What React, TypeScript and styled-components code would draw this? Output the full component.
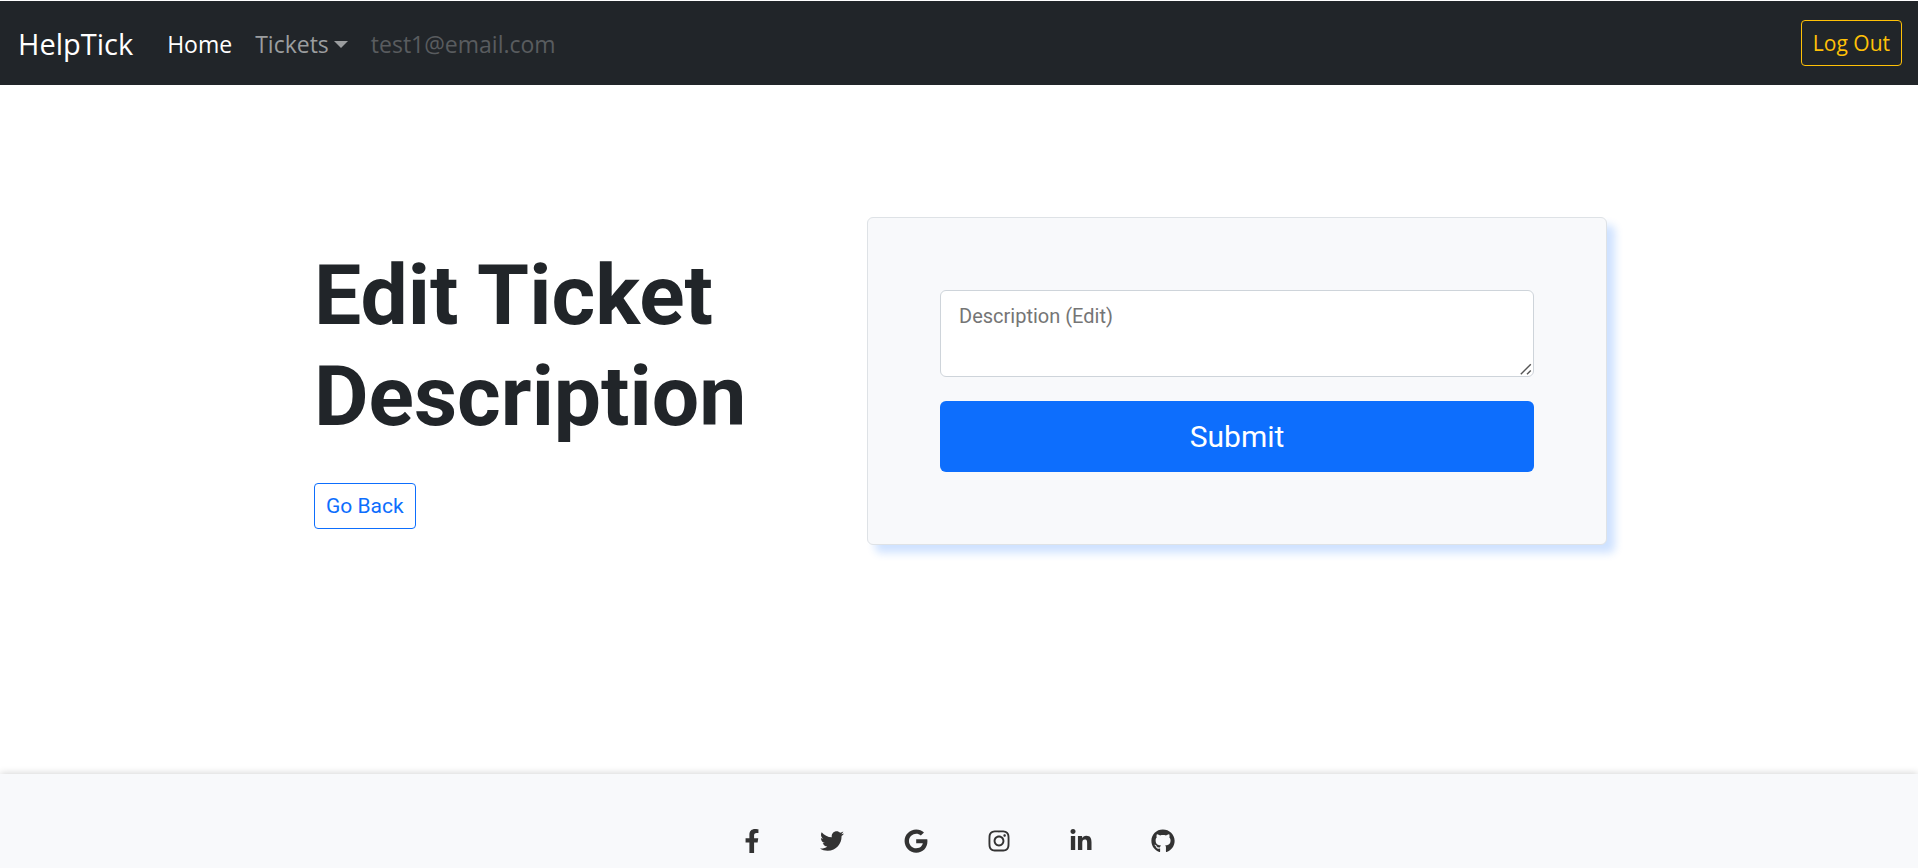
import React from 'react';
import styled, { createGlobalStyle, css } from 'styled-components';
import {
  FaFacebookF,
  FaTwitter,
  FaGoogle,
  FaInstagram,
  FaLinkedinIn,
  FaGithub,
} from 'react-icons/fa';

const navFont = `'Segoe UI', 'Open Sans', 'Noto Sans', sans-serif`;
const bodyFont = `Roboto, 'Liberation Sans', sans-serif`;

const GlobalStyle = createGlobalStyle`
  *, *::before, *::after { box-sizing: border-box; }
  body {
    margin: 0;
    background: #fff;
    color: #212529;
    font-family: ${bodyFont};
    font-size: 20px;
    line-height: 30px;
  }
`;

const Page = styled.div`
  display: flex;
  flex-direction: column;
  min-height: 100vh;
`;

const Navbar = styled.nav`
  display: flex;
  align-items: center;
  padding: 18px 16px 18px 18px;
  border-top: 1px solid #fff;
  background: #212529;
  font-family: ${navFont};
`;

const Brand = styled.a`
  margin-right: 34px;
  padding-top: 2px;
  color: #fff;
  font-size: 29px;
  line-height: 46px;
  text-decoration: none;
`;

const NavList = styled.ul`
  display: flex;
  flex: 1;
  gap: 23px;
  margin: 0;
  padding: 0;
  list-style: none;
`;

const navItem = css`
  display: flex;
  align-items: center;
  gap: 5px;
  padding: 2px 0 0;
  border: 0;
  background: none;
  font: inherit;
  font-size: 23px;
  line-height: 46px;
  text-decoration: none;
`;

const NavLink = styled.a`
  ${navItem}
  color: #fff;
`;

const NavToggle = styled.button`
  ${navItem}
  color: #9b9d9f;

  &::after {
    content: '';
    border-top: 7px solid;
    border-left: 7px solid transparent;
    border-right: 7px solid transparent;
  }
`;

const NavText = styled.span`
  ${navItem}
  color: #595c5f;
`;

const OutlineButton = styled.button<{ $color: string }>`
  padding: 7px 11px;
  border: 1px solid ${(p) => p.$color};
  border-radius: 4px;
  background: transparent;
  color: ${(p) => p.$color};
  font: inherit;
  font-size: 21px;
  line-height: 30px;
  cursor: pointer;
`;

const Main = styled.main`
  display: flex;
  flex: 1;
  align-items: flex-start;
  width: 100%;
  max-width: 1296px;
  margin: 0 auto;
  padding: 132px 0;
`;

const Intro = styled.section`
  flex: 1;
  padding: 28px 3px 0;
`;

const Title = styled.h1`
  margin: 0 0 36px;
  font-size: 84px;
  font-weight: 700;
  line-height: 101px;
`;

const Card = styled.form`
  display: flex;
  flex-direction: column;
  gap: 24px;
  width: 740px;
  padding: 72px;
  border: 1px solid #dee2e6;
  border-radius: 6px;
  background: #f8f9fb;
  box-shadow: 8px 8px 8px rgba(13, 110, 253, 0.2);
`;

const DescriptionField = styled.div`
  position: relative;
`;

const Description = styled.textarea`
  display: block;
  width: 100%;
  height: 87px;
  padding: 10px 18px;
  border: 1px solid #ced4da;
  border-radius: 6px;
  background: #fff;
  color: #212529;
  font: inherit;
  resize: vertical;

  &::placeholder {
    color: #757575;
  }

  &::-webkit-resizer {
    background: transparent;
  }
`;

const Grip = styled.svg`
  position: absolute;
  right: 2px;
  bottom: 2px;
  width: 12px;
  height: 12px;
  pointer-events: none;
`;

const SubmitButton = styled.button`
  padding: 13px 20px;
  border: 0;
  border-radius: 6px;
  background: #0d6efd;
  color: #fff;
  font: inherit;
  font-size: 30px;
  line-height: 45px;
  cursor: pointer;
`;

const Footer = styled.footer`
  display: flex;
  justify-content: center;
  gap: 60px;
  padding: 55px 0 15px;
  background: #f8f9fb;
  box-shadow: 0 0 8px rgba(0, 0, 0, 0.2);
`;

const SocialLink = styled.a<{ $width: number }>`
  display: flex;
  justify-content: center;
  width: ${(p) => p.$width}px;
  color: #333;

  svg {
    flex: none;
    width: 24px;
    height: 24px;
  }
`;

const socials = [
  { label: 'Facebook', Icon: FaFacebookF, width: 16 },
  { label: 'Twitter', Icon: FaTwitter, width: 24 },
  { label: 'Google', Icon: FaGoogle, width: 24 },
  { label: 'Instagram', Icon: FaInstagram, width: 22 },
  { label: 'LinkedIn', Icon: FaLinkedinIn, width: 22 },
  { label: 'GitHub', Icon: FaGithub, width: 22 },
];

export default function App() {
  return (
    <>
      <GlobalStyle />
      <Page>
        <Navbar>
          <Brand href="#">HelpTick</Brand>
          <NavList>
            <li><NavLink href="#">Home</NavLink></li>
            <li><NavToggle type="button" aria-haspopup="true">Tickets</NavToggle></li>
            <li><NavText>test1@email.com</NavText></li>
          </NavList>
          <OutlineButton type="button" $color="#ffc107">Log Out</OutlineButton>
        </Navbar>
        <Main>
          <Intro>
            <Title>Edit Ticket Description</Title>
            <OutlineButton type="button" $color="#0d6efd">Go Back</OutlineButton>
          </Intro>
          <Card onSubmit={(e: React.FormEvent) => e.preventDefault()}>
            <DescriptionField>
              <Description aria-label="Description" placeholder="Description (Edit)" />
              <Grip viewBox="0 0 12 12" stroke="#555" strokeWidth="1.4" aria-hidden="true">
                <path d="M0.8 11.2 L10.8 1.2 M7 11.2 L10.8 7.4" />
              </Grip>
            </DescriptionField>
            <SubmitButton type="submit">Submit</SubmitButton>
          </Card>
        </Main>
        <Footer>
          {socials.map(({ label, Icon, width }) => (
            <SocialLink key={label} href="#" aria-label={label} $width={width}>
              <Icon />
            </SocialLink>
          ))}
        </Footer>
      </Page>
    </>
  );
}
